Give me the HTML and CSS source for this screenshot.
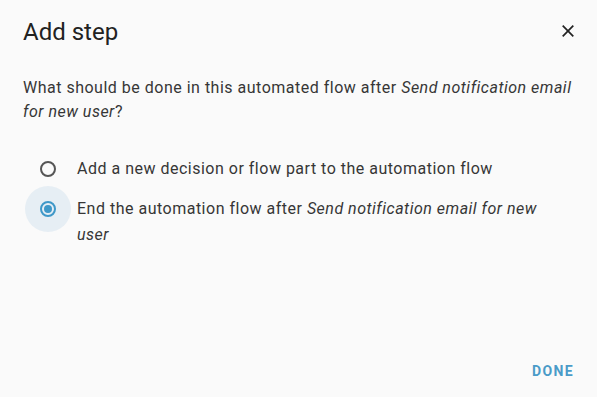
FILE: index.html
```html
<!DOCTYPE html>
<html>
<head>
<meta charset="utf-8">
<link rel="stylesheet" href="styles.css">
</head>
<body>
<div class="dialog">
  <header class="header">
    <h1 class="title">Add step</h1>
    <button class="close" aria-label="Close">
      <svg width="12" height="12" viewBox="0 0 12 12"><path d="M0.7 0.7L11.3 11.3M11.3 0.7L0.7 11.3" stroke="#222" stroke-width="1.7" fill="none"/></svg>
    </button>
  </header>
  <div class="content">
    <p class="question">What should be done in this automated flow after <em>Send notification email for new user</em>?</p>
    <div class="options">
      <label class="option">
        <span class="radio-wrap"><span class="radio"></span></span>
        <span class="label">Add a new decision or flow part to the automation flow</span>
      </label>
      <label class="option">
        <span class="radio-wrap focused"><span class="radio checked"></span></span>
        <span class="label">End the automation flow after <em>Send notification email for new user</em></span>
      </label>
    </div>
  </div>
  <footer class="actions">
    <button class="done">DONE</button>
  </footer>
</div>
</body>
</html>
```
FILE: styles.css
```css
html, body {
  margin: 0;
  padding: 0;
  background: #fafafa;
}
body {
  font-family: Roboto, "Liberation Sans", sans-serif;
  width: 597px;
  height: 397px;
  overflow: hidden;
}
.dialog {
  display: flex;
  flex-direction: column;
  height: 397px;
  box-sizing: border-box;
}
.header {
  display: flex;
  align-items: center;
  justify-content: space-between;
  padding: 16px 23px 0 23px;
  height: 32px;
}
.title {
  margin: 0;
  font-size: 24px;
  font-weight: 400;
  color: #222;
  line-height: 32px;
}
.close {
  border: 0;
  background: none;
  padding: 0;
  width: 12px;
  height: 12px;
  display: flex;
  align-items: center;
  justify-content: center;
  cursor: pointer;
  margin-top: -2px;
}
.content {
  padding: 28px 23px 0 23px;
  flex: 1;
}
.question {
  margin: 0;
  font-size: 16px;
  line-height: 24px;
  color: #363636;
  letter-spacing: 0.5px;
}
.options {
  margin-top: 25px;
  padding-left: 5px;
  padding-right: 10px;
  display: flex;
  flex-direction: column;
}
.option {
  display: flex;
  align-items: flex-start;
  font-size: 16px;
  line-height: 26px;
  color: #363636;
  letter-spacing: 0.5px;
}
.label {
  padding-top: 7px;
  margin-left: 9px;
}
.radio-wrap {
  width: 40px;
  height: 40px;
  display: flex;
  align-items: center;
  justify-content: center;
  position: relative;
  flex: none;
}
.radio-wrap.focused::before {
  content: "";
  position: absolute;
  width: 46px;
  height: 46px;
  border-radius: 50%;
  background: #e6eef4;
  left: -3px;
  top: -3px;
}
.radio {
  position: relative;
  width: 12px;
  height: 12px;
  border: 2px solid #555;
  border-radius: 50%;
}
.radio.checked {
  border-color: #3f98c8;
}
.radio.checked::after {
  content: "";
  position: absolute;
  left: 2px;
  top: 2px;
  width: 8px;
  height: 8px;
  border-radius: 50%;
  background: #3f98c8;
}
.actions {
  display: flex;
  justify-content: flex-end;
  padding: 0 23px 14px 0;
}
.done {
  border: 0;
  background: none;
  font-family: Roboto, sans-serif;
  font-weight: 700;
  font-size: 14px;
  letter-spacing: 1.4px;
  color: #4a9bc8;
  padding: 0;
  height: 24px;
  cursor: pointer;
}
```
